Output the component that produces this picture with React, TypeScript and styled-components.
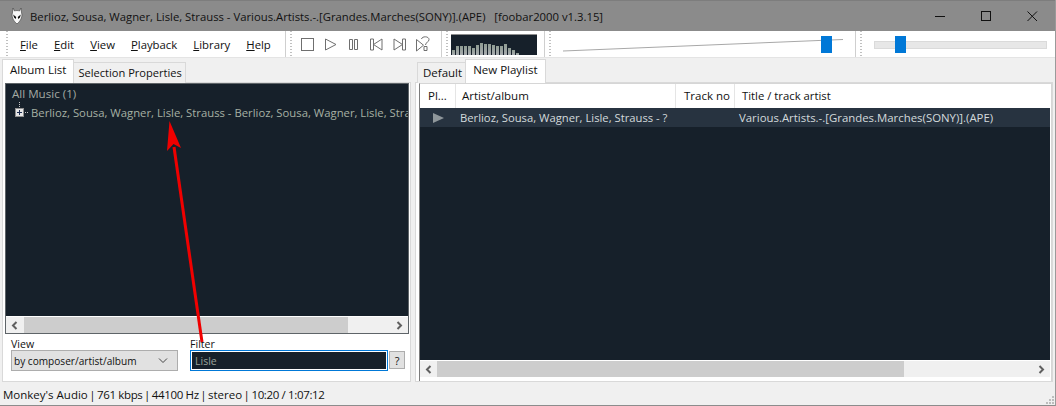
import React from "react";
import styled, { createGlobalStyle } from "styled-components";

const Global = createGlobalStyle`
  html, body { margin: 0; padding: 0; background: #f0f0f0; }
  #root { width: 1056px; height: 406px; overflow: hidden; }
  * { box-sizing: border-box; }
`;

const Win = styled.div`
  position: relative;
  width: 1056px;
  height: 406px;
  display: flex;
  flex-direction: column;
  font-family: "Open Sans", "Noto Sans", sans-serif;
  font-size: 11.5px;
  color: #111;
  background: #f0f0f0;
  border-right: 1px solid #9a9a9a;
  border-bottom: 1px solid #8c8c8c;
  overflow: hidden;
`;

const TitleBar = styled.div`
  height: 31px;
  flex: none;
  background: #8b8b8b;
  border-top: 1px solid #7d7d7d;
  display: flex;
  align-items: center;
  padding-left: 11px;
`;
const TitleText = styled.div`
  margin-left: 7px;
  font-size: 11.3px;
  color: #111;
  white-space: pre;
  flex: 1;
`;
const WinBtn = styled.div`
  width: 46px;
  height: 30px;
  display: flex;
  align-items: center;
  justify-content: center;
`;

const Toolbar = styled.div`
  height: 27px;
  flex: none;
  background: #fff;
  border-bottom: 1px solid #e4e4e4;
  display: flex;
  align-items: stretch;
`;
const Band = styled.div<{ $w: number; $pl?: number }>`
  width: ${(p) => p.$w}px;
  flex: none;
  display: flex;
  align-items: center;
  border-right: 1px solid #cfcfcf;
  padding-left: ${(p) => p.$pl ?? 4}px;
`;
const LastBand = styled.div`
  flex: 1;
  display: flex;
  align-items: center;
  padding-left: 4px;
`;
const Gripper = styled.div`
  width: 2px;
  height: 100%;
  flex: none;
  background-image: linear-gradient(#c0c0c0 50%, transparent 50%);
  background-size: 2px 3px;
`;
const Menu = styled.div`
  display: flex;
  align-items: center;
  gap: 16px;
  margin-left: 12px;
  font-size: 11.35px;
`;
const U = styled.span`
  text-decoration: underline;
  text-underline-offset: 1px;
`;
const Transport = styled.div`
  display: flex;
  align-items: center;
  gap: 6px;
  margin-left: 7px;
`;
const Vis = styled.div`
  width: 86px;
  height: 21px;
  margin-left: 3px;
  background: #16202a;
  border-top: 1px solid #8d8d8d;
  display: flex;
  align-items: flex-end;
  padding-left: 1px;
  gap: 1px;
`;
const VisBar = styled.div<{ $h: number }>`
  width: 3px;
  height: ${(p) => p.$h}px;
  background: linear-gradient(#8f9c92, #a8acb0);
`;
const SliderWrap = styled.div<{ $w: number; $ml: number }>`
  position: relative;
  width: ${(p) => p.$w}px;
  height: 17px;
  margin-left: ${(p) => p.$ml}px;
`;
const Thumb = styled.div<{ $x: number }>`
  position: absolute;
  left: ${(p) => p.$x}px;
  top: 0;
  width: 11px;
  height: 17px;
  background: #0078d7;
`;
const SeekTrack = styled.div`
  height: 8px;
  margin-top: 5px;
  background: #e7e7e7;
  border: 1px solid #dadada;
`;

const Body = styled.div`
  height: 324px;
  flex: none;
  display: flex;
  background: #f0f0f0;
`;
const LeftPane = styled.div`
  width: 411px;
  flex: none;
  display: flex;
  flex-direction: column;
  padding-left: 2px;
`;
const RightPane = styled.div`
  flex: 1;
  display: flex;
  flex-direction: column;
  margin-left: 4px;
  padding-right: 2px;
`;
const TabRow = styled.div`
  height: 24px;
  flex: none;
  display: flex;
  align-items: flex-end;
`;
const RightTabRow = styled(TabRow)`
  padding-left: 2px;
`;
const Tab = styled.div<{ $active?: boolean }>`
  height: ${(p) => (p.$active ? 24 : 21)}px;
  padding: ${(p) => (p.$active ? "0 7px 5px" : "0 3px 2px 5px")};
  display: flex;
  align-items: center;
  background: ${(p) => (p.$active ? "#fff" : "#f0f0f0")};
  border: 1px solid #d9d9d9;
  border-bottom: none;
  white-space: nowrap;
  margin: 0 -1px -1px 0;
  position: relative;
  z-index: ${(p) => (p.$active ? 1 : 0)};
`;
const NarrowTab = styled(Tab)`
  font-size: 11.1px;
  padding-left: 4px;
`;
const TabPage = styled.div`
  flex: 1;
  min-height: 0;
  background: #fff;
  border: 1px solid #d9d9d9;
  display: flex;
  flex-direction: column;
`;
const LeftPage = styled(TabPage)`
  padding: 0 1px 0 2px;
`;
const RightPage = styled(TabPage)`
  padding: 0 0 0 3px;
`;
const PlaylistFrame = styled.div`
  flex: 1;
  min-height: 0;
  display: flex;
  flex-direction: column;
  background: #fff;
  border: 1px solid #d6d6d6;
  border-left-color: #7c7c7c;
  border-bottom: none;
  padding: 0 1px 4px 0;
`;
const TreeFrame = styled.div`
  height: 251px;
  flex: none;
  display: flex;
  flex-direction: column;
  border: 1px solid #5e6468;
  background: #16202a;
`;
const TreeBody = styled.div`
  flex: 1;
  min-height: 0;
  padding-left: 6px;
  color: #a3aaa3;
  overflow: hidden;
  white-space: nowrap;
`;
const TreeRow = styled.div`
  height: 19px;
  display: flex;
  align-items: center;
  font-size: 11.6px;
`;
const TreeChild = styled(TreeRow)`
  margin-left: 3px;
  color: #a6b0a4;
  font-size: 11.3px;
`;
const Expander = styled.div`
  position: relative;
  width: 9px;
  height: 9px;
  flex: none;
  background: #e6e6e6;
  border: 1px solid #8f8f8f;
  margin-right: 7px;
  &::before { content: ""; position: absolute; left: 1px; right: 1px; top: 3px; height: 1px; background: #1c2c50; }
  &::after { content: ""; position: absolute; top: 1px; bottom: 1px; left: 3px; width: 1px; background: #1c2c50; }
`;
const VTreeLine = styled.i`
  position: absolute;
  left: 3px;
  top: -7px;
  width: 1px;
  height: 6px;
  background-image: linear-gradient(#c4c4c4 50%, transparent 50%);
  background-size: 1px 2px;
`;
const HTreeLine = styled.i`
  position: absolute;
  left: 9px;
  top: 3px;
  width: 4px;
  height: 1px;
  background-image: linear-gradient(90deg, #c4c4c4 50%, transparent 50%);
  background-size: 2px 1px;
`;
const Scrollbar = styled.div`
  height: 17px;
  flex: none;
  display: flex;
  align-items: stretch;
  background: #f0f0f0;
  border-top: 1px solid #fff;
`;
const ScrollBtn = styled.div<{ $w?: number }>`
  width: ${(p) => p.$w ?? 18}px;
  flex: none;
  display: flex;
  align-items: center;
  justify-content: center;
`;
const ScrollThumb = styled.div<{ $w: number }>`
  width: ${(p) => p.$w}px;
  flex: none;
  background: #cdcdcd;
`;
const ScrollRest = styled.div`
  flex: 1;
`;
const FilterRow = styled.div`
  display: flex;
  padding: 4px 0 0 6px;
`;
const Field = styled.div`
  display: flex;
  flex-direction: column;
  line-height: 12px;
  font-size: 10.6px;
`;
const ViewSelect = styled.div`
  width: 167px;
  height: 21px;
  background: #e1e1e1;
  border: 1px solid #adadad;
  display: flex;
  align-items: center;
  justify-content: space-between;
  padding: 0 9px 0 2px;
  font-size: 10.1px;
`;
const FilterCol = styled(Field)`
  margin-left: 12px;
`;
const FilterInput = styled.div`
  width: 198px;
  height: 21px;
  background: #16202a;
  border: 1px solid #0078d7;
  box-shadow: inset 0 0 0 1px #fff;
  color: #9aa39a;
  padding-left: 4px;
  display: flex;
  align-items: center;
  font-size: 10.5px;
`;
const HelpBtn = styled.div`
  width: 16px;
  height: 18px;
  margin: 13px 0 0 1px;
  background: #e1e1e1;
  border: 1px solid #adadad;
  display: flex;
  align-items: center;
  justify-content: center;
  font-size: 11px;
`;
const Header = styled.div`
  height: 24px;
  flex: none;
  display: flex;
  background: #fff;
`;
const HeadCell = styled.div<{ $w: number; $pl: number }>`
  width: ${(p) => p.$w}px;
  flex: none;
  padding: 0 0 2px ${(p) => p.$pl}px;
  display: flex;
  align-items: center;
  border-right: 1px solid #e5e5e5;
  white-space: nowrap;
`;
const HeadLast = styled(HeadCell)`
  border-right: none;
  font-size: 11.3px;
`;
const ListArea = styled.div`
  flex: 1;
  min-height: 0;
  background: #16202a;
  color: #d3dadc;
  display: flex;
  flex-direction: column;
`;
const ListRow = styled.div`
  height: 19px;
  flex: none;
  display: flex;
  align-items: center;
  background: #273340;
  white-space: nowrap;
`;
const ListCell = styled.div<{ $w: number; $pl: number; $fs?: number }>`
  width: ${(p) => p.$w}px;
  flex: none;
  padding-left: ${(p) => p.$pl}px;
  display: flex;
  align-items: center;
  font-size: ${(p) => p.$fs ?? 11.4}px;
`;
const Status = styled.div`
  flex: 1;
  line-height: 20px;
  white-space: pre;
  padding: 3px 0 0 3px;
  background: #f0f0f0;
`;
const Pipe = styled.span`
  margin: 0 -1.5px;
`;
const Num = styled.span`
  letter-spacing: -0.36px;
`;
const Grip = styled.svg`
  position: absolute;
  right: 1px;
  bottom: 1px;
`;
const ArrowLayer = styled.svg`
  position: absolute;
  left: 0;
  top: 0;
  pointer-events: none;
`;

const TIcon = ({ children, w = 17 }: { children: React.ReactNode; w?: number }) => (
  <svg width={w} height="16" viewBox={`0 0 ${w} 16`} fill="none" stroke="#6f6f6f" strokeWidth="1">
    {children}
  </svg>
);

const Chevron = ({ left }: { left?: boolean }) => (
  <svg width="8" height="9" viewBox="0 0 8 9" fill="none" stroke="#606060" strokeWidth="2">
    <path d={left ? "M5.5 1 L2 4.5 L5.5 8" : "M2.5 1 L6 4.5 L2.5 8"} />
  </svg>
);

const bars = [5, 9, 9, 9, 9, 7, 10, 12, 11, 11, 10, 9, 9, 11, 7, 5, 2];

export default function App() {
  return (
    <Win>
      <Global />
      <TitleBar>
        <svg width="12" height="18" viewBox="0 0 12 18">
          <path d="M2 1 L3.5 4 C5 3.4 7 3.4 8.5 4 L10 1 L10.6 6 C11.6 9 10 13 7.5 15.5 L6 17 L4.5 15.5 C2 13 0.4 9 1.4 6 Z" fill="#f8f8f8" stroke="#3a3a3a" strokeWidth="0.6" />
          <path d="M2.2 7.5 L5.2 10 L4.8 12 L3 10.6 Z M9.8 7.5 L6.8 10 L7.2 12 L9 10.6 Z" fill="#0c0c0c" />
        </svg>
        <TitleText>{"Berlioz, Sousa, Wagner, Lisle, Strauss - Various.Artists.-.[Grandes.Marches(SONY)].(APE)   [foobar2000 v1.3.15]"}</TitleText>
        <WinBtn>
          <svg width="11" height="11" viewBox="0 0 11 11"><path d="M0 5.5 H10" stroke="#111" /></svg>
        </WinBtn>
        <WinBtn>
          <svg width="11" height="11" viewBox="0 0 11 11"><rect x="0.5" y="0.5" width="9" height="9" fill="none" stroke="#111" /></svg>
        </WinBtn>
        <WinBtn>
          <svg width="11" height="11" viewBox="0 0 11 11"><path d="M0.5 0.5 L10 10 M10 0.5 L0.5 10" stroke="#111" /></svg>
        </WinBtn>
      </TitleBar>
      <Toolbar>
        <Band $w={286} $pl={6}>
          <Gripper />
          <Menu>
            <span><U>F</U>ile</span>
            <span><U>E</U>dit</span>
            <span><U>V</U>iew</span>
            <span><U>P</U>layback</span>
            <span><U>L</U>ibrary</span>
            <span><U>H</U>elp</span>
          </Menu>
        </Band>
        <Band $w={156}>
          <Gripper />
          <Transport>
            <TIcon><rect x="2.5" y="2.5" width="12" height="12" /></TIcon>
            <TIcon><path d="M3.5 3 L14 8.5 L3.5 14 Z" /></TIcon>
            <TIcon><path d="M4.5 3.5 H7.5 V13.5 H4.5 Z M9.5 3.5 H12.5 V13.5 H9.5 Z" /></TIcon>
            <TIcon><path d="M2.5 3 V14 H5.5 V3 Z M5.5 8.5 L14 3 V14 Z" /></TIcon>
            <TIcon><path d="M14.5 3 V14 H11.5 V3 Z M11.5 8.5 L3 3 V14 Z" /></TIcon>
            <TIcon w={18}>
              <path d="M2.5 3.5 V15 L9.5 9.2 Z" />
              <path d="M7.5 3 C8 0 15 0 15 3.5 C15 6.5 11.5 6 11.5 9 M10 10.5 H13 V14.5 H10 Z" />
            </TIcon>
          </Transport>
        </Band>
        <Band $w={103}>
          <Gripper />
          <Vis>
            {bars.map((h, i) => (
              <VisBar key={i} $h={h} />
            ))}
          </Vis>
        </Band>
        <Band $w={311}>
          <Gripper />
          <SliderWrap $w={280} $ml={12}>
            <svg width="280" height="17" viewBox="0 0 280 17">
              <path d="M0 15 L280 3.5" stroke="#a8a8a8" strokeWidth="1" />
            </svg>
            <Thumb $x={258} />
          </SliderWrap>
        </Band>
        <LastBand>
          <Gripper />
          <SliderWrap $w={173} $ml={12}>
            <SeekTrack />
            <Thumb $x={21} />
          </SliderWrap>
        </LastBand>
      </Toolbar>
      <Body>
        <LeftPane>
          <TabRow>
            <Tab $active>Album List</Tab>
            <NarrowTab>Selection Properties</NarrowTab>
          </TabRow>
          <LeftPage>
            <TreeFrame>
              <TreeBody>
                <TreeRow>All Music (1)</TreeRow>
                <TreeChild>
                  <Expander>
                    <VTreeLine />
                    <HTreeLine />
                  </Expander>
                  <span>Berlioz, Sousa, Wagner, Lisle, Strauss - Berlioz, Sousa, Wagner, Lisle, Strauss - Various</span>
                </TreeChild>
              </TreeBody>
              <Scrollbar>
                <ScrollBtn><Chevron left /></ScrollBtn>
                <ScrollThumb $w={324} />
                <ScrollRest />
                <ScrollBtn><Chevron /></ScrollBtn>
              </Scrollbar>
            </TreeFrame>
            <FilterRow>
              <Field>
                View
                <ViewSelect>
                  by composer/artist/album
                  <svg width="10" height="6" viewBox="0 0 10 6" fill="none" stroke="#444"><path d="M1 0.5 L5 4.5 L9 0.5" /></svg>
                </ViewSelect>
              </Field>
              <FilterCol>
                Filter
                <FilterInput>Lisle</FilterInput>
              </FilterCol>
              <HelpBtn>?</HelpBtn>
            </FilterRow>
          </LeftPage>
        </LeftPane>
        <RightPane>
          <RightTabRow>
            <Tab>Default</Tab>
            <Tab $active>New Playlist</Tab>
          </RightTabRow>
          <RightPage>
            <PlaylistFrame>
              <Header>
                <HeadCell $w={36} $pl={8}>Pl...</HeadCell>
                <HeadCell $w={220} $pl={6}>Artist/album</HeadCell>
                <HeadCell $w={59} $pl={8}>Track no</HeadCell>
                <HeadLast $w={300} $pl={7}>Title / track artist</HeadLast>
              </Header>
              <ListArea>
                <ListRow>
                  <ListCell $w={36} $pl={13}>
                    <svg width="11" height="10" viewBox="0 0 11 10"><path d="M0 0 L11 5 L0 10 Z" fill="#8f979b" /></svg>
                  </ListCell>
                  <ListCell $w={220} $pl={4} $fs={11.25}>Berlioz, Sousa, Wagner, Lisle, Strauss - ?</ListCell>
                  <ListCell $w={59} $pl={0} />
                  <ListCell $w={300} $pl={4}>Various.Artists.-.[Grandes.Marches(SONY)].(APE)</ListCell>
                </ListRow>
              </ListArea>
              <Scrollbar>
                <ScrollBtn $w={17}><Chevron left /></ScrollBtn>
                <ScrollThumb $w={467} />
                <ScrollRest />
                <ScrollBtn><Chevron /></ScrollBtn>
              </Scrollbar>
            </PlaylistFrame>
          </RightPage>
        </RightPane>
      </Body>
      <Status>
        Monkey's Audio <Pipe>|</Pipe> <Num>761 kbps</Num> <Pipe>|</Pipe> <Num>44100 Hz</Num> <Pipe>|</Pipe> stereo <Pipe>|</Pipe> <Num>10:20 / 1:07:12</Num>
      </Status>
      <Grip width="8" height="8" viewBox="0 0 8 8" fill="#bdbdbd">
        <rect x="6" y="0" width="2" height="2" />
        <rect x="3" y="3" width="2" height="2" />
        <rect x="6" y="3" width="2" height="2" />
        <rect x="0" y="6" width="2" height="2" />
        <rect x="3" y="6" width="2" height="2" />
        <rect x="6" y="6" width="2" height="2" />
      </Grip>
      <ArrowLayer width="1056" height="406" viewBox="0 0 1056 406">
        <path d="M202 342 L174 147" stroke="#f00000" strokeWidth="3" />
        <path d="M169.5 121 L181 148 L173.5 144 L167 151 Z" fill="#f00000" />
      </ArrowLayer>
    </Win>
  );
}
